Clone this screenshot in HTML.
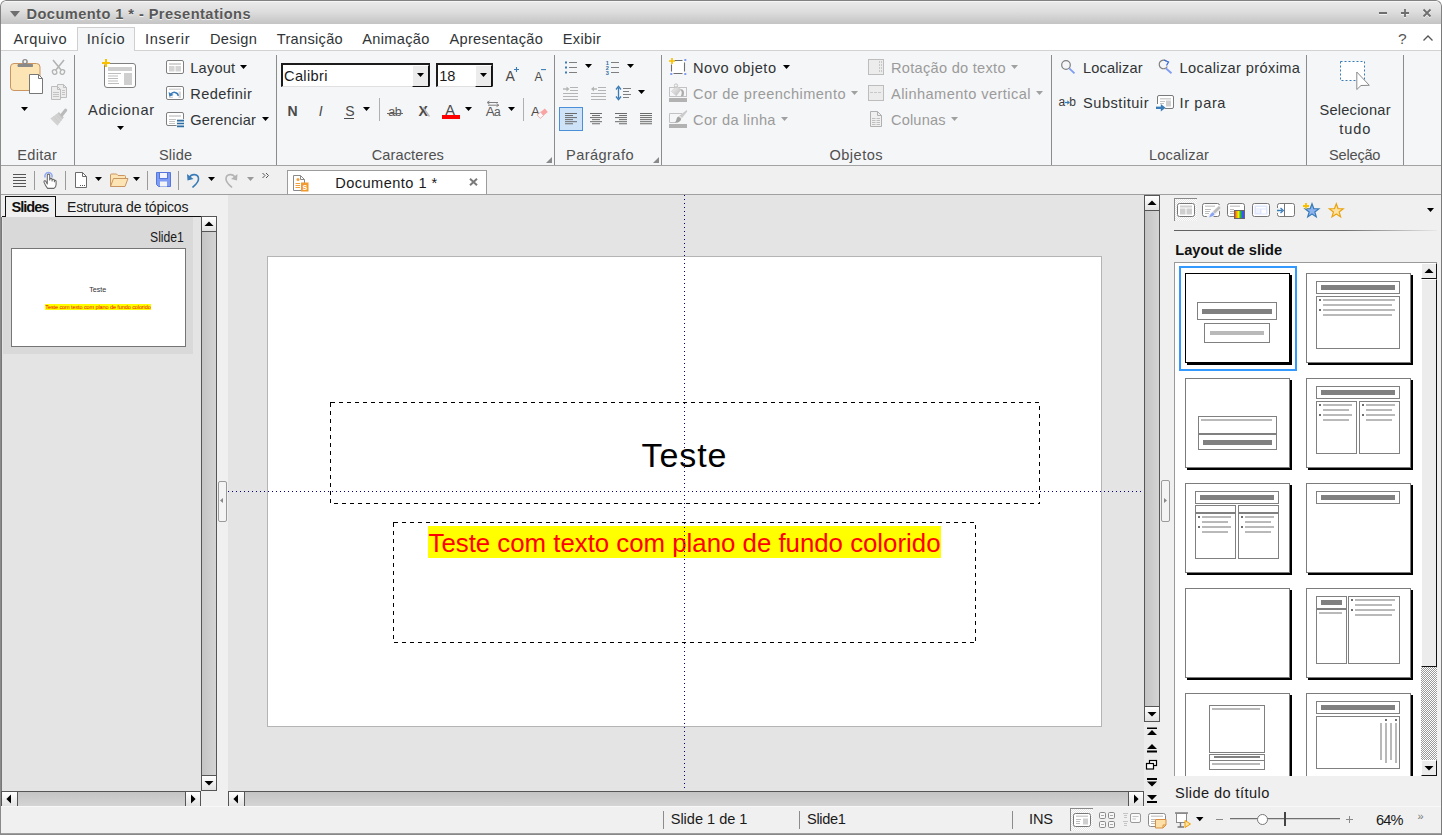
<!DOCTYPE html>
<html lang="pt-BR"><head><meta charset="utf-8"><title>Documento 1 * - Presentations</title>
<style>
html,body{margin:0;padding:0;background:#fff;}
body{width:1442px;height:835px;overflow:hidden;position:relative;font-family:"Liberation Sans",sans-serif;}
#win{position:absolute;left:0;top:0;width:1442px;height:835px;overflow:hidden;background:#f0f0f0;border-radius:6px 6px 0 0;}
#win div,#win span,#win svg{position:absolute;box-sizing:border-box;}
.t{white-space:nowrap;}
svg{overflow:visible;}
.vs{width:1px;background:#8c8c8c;}
.sbt{background:linear-gradient(90deg,#c4c4c4,#d4d4d4);}
.sbh{background:linear-gradient(180deg,#c4c4c4,#d4d4d4);}
.btn{background:linear-gradient(180deg,#ffffff,#e2e2e2);border:1px solid #555;}
</style></head><body><div id="win">
<div style="left:0px;top:0px;width:1442px;height:24px;background:linear-gradient(180deg,#ebebeb 0%,#dedede 45%,#c4c4c4 100%);border:1px solid #828282;border-bottom:none;border-radius:6px 6px 0 0;"></div><div style="left:5px;top:1px;width:1432px;height:1px;background:#f6f6f6;"></div><svg style="left:10px;top:11px;" width="10" height="6" viewBox="0 0 10 6"><path d="M0 0H10L5 6Z" fill="#6e6e6e"/></svg><span class="t" style="left:26.5px;top:6px;font-size:14.6px;line-height:16px;color:#585858;font-weight:700;font-family:'Liberation Sans', sans-serif;letter-spacing:0.441px;text-shadow:0 1px 0 rgba(255,255,255,.8);">Documento 1 * - Presentations</span><svg style="left:1379px;top:9px;" width="52" height="9" viewBox="0 0 52 9"><g stroke="#fff" stroke-width="1.800" fill="none" opacity=".7" transform="translate(0 1)"><path d="M0 4H8"/><path d="M22 4H30M26 0V8"/><path d="M44.500 0.500L51.500 7.500M51.500 0.500L44.500 7.500"/></g><g stroke="#6e6e6e" stroke-width="1.800" fill="none"><path d="M0 4H8"/><path d="M22 4H30M26 0V8"/><path d="M44.500 0.500L51.500 7.500M51.500 0.500L44.500 7.500"/></g></svg><div style="left:0px;top:24px;width:1442px;height:26px;background:#fff;"></div><div style="left:0px;top:50px;width:1442px;height:116px;background:#f5f6f7;border-top:1px solid #d2d2d2;"></div><div style="left:77px;top:27px;width:58px;height:24px;background:#f5f6f7;border:1px solid #cfcfcf;border-bottom:none;"></div><span class="t" style="left:13.5px;top:31px;font-size:14.6px;line-height:16px;color:#303436;font-weight:400;font-family:'Liberation Sans', sans-serif;letter-spacing:0.586px;">Arquivo</span><span class="t" style="left:86.7px;top:31px;font-size:14.6px;line-height:16px;color:#303436;font-weight:400;font-family:'Liberation Sans', sans-serif;letter-spacing:0.622px;">Início</span><span class="t" style="left:145.0px;top:31px;font-size:14.6px;line-height:16px;color:#303436;font-weight:400;font-family:'Liberation Sans', sans-serif;letter-spacing:0.659px;">Inserir</span><span class="t" style="left:209.9px;top:31px;font-size:14.6px;line-height:16px;color:#303436;font-weight:400;font-family:'Liberation Sans', sans-serif;letter-spacing:0.293px;">Design</span><span class="t" style="left:276.8px;top:31px;font-size:14.6px;line-height:16px;color:#303436;font-weight:400;font-family:'Liberation Sans', sans-serif;letter-spacing:0.294px;">Transição</span><span class="t" style="left:362.3px;top:31px;font-size:14.6px;line-height:16px;color:#303436;font-weight:400;font-family:'Liberation Sans', sans-serif;letter-spacing:0.299px;">Animação</span><span class="t" style="left:449.5px;top:31px;font-size:14.6px;line-height:16px;color:#303436;font-weight:400;font-family:'Liberation Sans', sans-serif;letter-spacing:0.294px;">Apresentação</span><span class="t" style="left:562.7px;top:31px;font-size:14.6px;line-height:16px;color:#303436;font-weight:400;font-family:'Liberation Sans', sans-serif;letter-spacing:0.360px;">Exibir</span><span class="t" style="left:1398px;top:30px;font-size:15.5px;line-height:17px;color:#555;font-weight:400;font-family:'Liberation Sans', sans-serif;">?</span><svg style="left:1422.5px;top:35px;" width="10" height="6" viewBox="0 0 10 6"><path d="M0.5 5.5L5 1L9.5 5.5" stroke="#555" stroke-width="1.3" fill="none"/></svg><div class="vs" style="left:74px;top:55px;width:1px;height:110px;"></div><div class="vs" style="left:276px;top:55px;width:1px;height:110px;"></div><div class="vs" style="left:554px;top:55px;width:1px;height:110px;"></div><div class="vs" style="left:661px;top:55px;width:1px;height:110px;"></div><div class="vs" style="left:1051px;top:55px;width:1px;height:110px;"></div><div class="vs" style="left:1306px;top:55px;width:1px;height:110px;"></div><div class="vs" style="left:1403px;top:55px;width:1px;height:110px;"></div><div style="left:0px;top:165px;width:1442px;height:1px;background:#a3a3a3;"></div><div style="left:379px;top:98px;width:1px;height:23px;background:#b0b0b0;"></div><div style="left:523px;top:98px;width:1px;height:23px;background:#b0b0b0;"></div><span class="t" style="left:17.2px;top:147px;font-size:14.6px;line-height:16px;color:#505050;font-weight:400;font-family:'Liberation Sans', sans-serif;letter-spacing:0.295px;">Editar</span><span class="t" style="left:159.0px;top:147px;font-size:14.6px;line-height:16px;color:#505050;font-weight:400;font-family:'Liberation Sans', sans-serif;letter-spacing:0.137px;">Slide</span><span class="t" style="left:371.7px;top:147px;font-size:14.6px;line-height:16px;color:#505050;font-weight:400;font-family:'Liberation Sans', sans-serif;letter-spacing:0.092px;">Caracteres</span><span class="t" style="left:566.0px;top:147px;font-size:14.6px;line-height:16px;color:#505050;font-weight:400;font-family:'Liberation Sans', sans-serif;letter-spacing:0.426px;">Parágrafo</span><span class="t" style="left:829.5px;top:147px;font-size:14.6px;line-height:16px;color:#505050;font-weight:400;font-family:'Liberation Sans', sans-serif;letter-spacing:0.451px;">Objetos</span><span class="t" style="left:1149.0px;top:147px;font-size:14.6px;line-height:16px;color:#505050;font-weight:400;font-family:'Liberation Sans', sans-serif;letter-spacing:0.174px;">Localizar</span><span class="t" style="left:1329.0px;top:147px;font-size:14.6px;line-height:16px;color:#505050;font-weight:400;font-family:'Liberation Sans', sans-serif;letter-spacing:-0.208px;">Seleção</span><svg style="left:546px;top:157px;" width="6" height="6" viewBox="0 0 6 6"><path d="M6 0V6H0Z" fill="#8a8a8a"/></svg><svg style="left:653px;top:157px;" width="6" height="6" viewBox="0 0 6 6"><path d="M6 0V6H0Z" fill="#8a8a8a"/></svg><span class="t" style="left:88px;top:102px;font-size:14.6px;line-height:16px;color:#303436;font-weight:400;font-family:'Liberation Sans', sans-serif;letter-spacing:0.645px;">Adicionar</span><span class="t" style="left:190.3px;top:60px;font-size:14.6px;line-height:16px;color:#303436;font-weight:400;font-family:'Liberation Sans', sans-serif;letter-spacing:0.194px;">Layout</span><span class="t" style="left:190.3px;top:86px;font-size:14.6px;line-height:16px;color:#303436;font-weight:400;font-family:'Liberation Sans', sans-serif;letter-spacing:0.387px;">Redefinir</span><span class="t" style="left:190.3px;top:112px;font-size:14.6px;line-height:16px;color:#303436;font-weight:400;font-family:'Liberation Sans', sans-serif;letter-spacing:0.178px;">Gerenciar</span><span class="t" style="left:693px;top:60px;font-size:14.6px;line-height:16px;color:#303436;font-weight:400;font-family:'Liberation Sans', sans-serif;letter-spacing:0.511px;">Novo objeto</span><span class="t" style="left:693px;top:86px;font-size:14.6px;line-height:16px;color:#9b9b9b;font-weight:400;font-family:'Liberation Sans', sans-serif;letter-spacing:0.426px;">Cor de preenchimento</span><span class="t" style="left:693px;top:112px;font-size:14.6px;line-height:16px;color:#9b9b9b;font-weight:400;font-family:'Liberation Sans', sans-serif;letter-spacing:0.345px;">Cor da linha</span><span class="t" style="left:891px;top:60px;font-size:14.6px;line-height:16px;color:#9b9b9b;font-weight:400;font-family:'Liberation Sans', sans-serif;letter-spacing:0.277px;">Rotação do texto</span><span class="t" style="left:891px;top:86px;font-size:14.6px;line-height:16px;color:#9b9b9b;font-weight:400;font-family:'Liberation Sans', sans-serif;letter-spacing:0.425px;">Alinhamento vertical</span><span class="t" style="left:891px;top:112px;font-size:14.6px;line-height:16px;color:#9b9b9b;font-weight:400;font-family:'Liberation Sans', sans-serif;letter-spacing:0.159px;">Colunas</span><span class="t" style="left:1083px;top:60px;font-size:14.6px;line-height:16px;color:#303436;font-weight:400;font-family:'Liberation Sans', sans-serif;letter-spacing:0.137px;">Localizar</span><span class="t" style="left:1179.5px;top:60px;font-size:14.6px;line-height:16px;color:#303436;font-weight:400;font-family:'Liberation Sans', sans-serif;letter-spacing:0.383px;">Localizar próxima</span><span class="t" style="left:1083px;top:95px;font-size:14.6px;line-height:16px;color:#303436;font-weight:400;font-family:'Liberation Sans', sans-serif;letter-spacing:0.517px;">Substituir</span><span class="t" style="left:1179.5px;top:95px;font-size:14.6px;line-height:16px;color:#303436;font-weight:400;font-family:'Liberation Sans', sans-serif;letter-spacing:0.635px;">Ir para</span><span class="t" style="left:1319.5px;top:102px;font-size:14.6px;line-height:16px;color:#303436;font-weight:400;font-family:'Liberation Sans', sans-serif;letter-spacing:0.226px;">Selecionar</span><span class="t" style="left:1339.3px;top:121px;font-size:14.6px;line-height:16px;color:#303436;font-weight:400;font-family:'Liberation Sans', sans-serif;letter-spacing:0.865px;">tudo</span><svg style="left:20.8px;top:106.8px;" width="7" height="4" viewBox="0 0 7 4"><path d="M0 0H7L3.5 4Z" fill="#000"/></svg><svg style="left:116.5px;top:125.5px;" width="7" height="4" viewBox="0 0 7 4"><path d="M0 0H7L3.5 4Z" fill="#000"/></svg><svg style="left:240.2px;top:65.2px;" width="7" height="4" viewBox="0 0 7 4"><path d="M0 0H7L3.5 4Z" fill="#000"/></svg><svg style="left:262px;top:117.3px;" width="7" height="4" viewBox="0 0 7 4"><path d="M0 0H7L3.5 4Z" fill="#000"/></svg><svg style="left:363px;top:106.9px;" width="7" height="4" viewBox="0 0 7 4"><path d="M0 0H7L3.5 4Z" fill="#000"/></svg><svg style="left:464.8px;top:106.9px;" width="7" height="4" viewBox="0 0 7 4"><path d="M0 0H7L3.5 4Z" fill="#000"/></svg><svg style="left:507.8px;top:106.9px;" width="7" height="4" viewBox="0 0 7 4"><path d="M0 0H7L3.5 4Z" fill="#000"/></svg><svg style="left:584.8px;top:63.8px;" width="7" height="4" viewBox="0 0 7 4"><path d="M0 0H7L3.5 4Z" fill="#000"/></svg><svg style="left:626.8px;top:63.8px;" width="7" height="4" viewBox="0 0 7 4"><path d="M0 0H7L3.5 4Z" fill="#000"/></svg><svg style="left:638px;top:90px;" width="7" height="4" viewBox="0 0 7 4"><path d="M0 0H7L3.5 4Z" fill="#000"/></svg><svg style="left:783px;top:65.1px;" width="7" height="4" viewBox="0 0 7 4"><path d="M0 0H7L3.5 4Z" fill="#000"/></svg><svg style="left:851px;top:91px;" width="7" height="4" viewBox="0 0 7 4"><path d="M0 0H7L3.5 4Z" fill="#a0a0a0"/></svg><svg style="left:781px;top:117px;" width="7" height="4" viewBox="0 0 7 4"><path d="M0 0H7L3.5 4Z" fill="#a0a0a0"/></svg><svg style="left:1010.8px;top:65.1px;" width="7" height="4" viewBox="0 0 7 4"><path d="M0 0H7L3.5 4Z" fill="#a0a0a0"/></svg><svg style="left:1036px;top:91px;" width="7" height="4" viewBox="0 0 7 4"><path d="M0 0H7L3.5 4Z" fill="#a0a0a0"/></svg><svg style="left:951px;top:117px;" width="7" height="4" viewBox="0 0 7 4"><path d="M0 0H7L3.5 4Z" fill="#a0a0a0"/></svg><div style="left:281px;top:63px;width:149px;height:24px;background:#fff;border:2px solid #1c1c1c;border-right-width:1px;border-bottom:1px solid #e0e0e0;"></div><div style="left:412px;top:65px;width:17px;height:22px;background:#ececec;border-right:1px solid #111;border-bottom:1px solid #111;border-top:1px solid #fff;border-left:1px solid #fff;"></div><svg style="left:416.5px;top:73px;" width="7" height="4" viewBox="0 0 7 4"><path d="M0 0H7L3.5 4Z" fill="#000"/></svg><div style="left:436px;top:63px;width:57px;height:24px;background:#fff;border:2px solid #1c1c1c;border-right-width:1px;border-bottom:1px solid #e0e0e0;"></div><div style="left:475px;top:65px;width:17px;height:22px;background:#ececec;border-right:1px solid #111;border-bottom:1px solid #111;border-top:1px solid #fff;border-left:1px solid #fff;"></div><svg style="left:479.5px;top:73px;" width="7" height="4" viewBox="0 0 7 4"><path d="M0 0H7L3.5 4Z" fill="#000"/></svg><span class="t" style="left:284px;top:68px;font-size:14.6px;line-height:16px;color:#1a1a1a;font-weight:400;font-family:'Liberation Sans', sans-serif;letter-spacing:0.357px;">Calibri</span><span class="t" style="left:439.3px;top:68px;font-size:14.6px;line-height:16px;color:#1a1a1a;font-weight:400;font-family:'Liberation Sans', sans-serif;letter-spacing:-0.234px;">18</span><div style="left:0px;top:166px;width:1442px;height:28px;background:#f0f0f0;"></div><div style="left:0px;top:194px;width:1442px;height:1px;background:#a0a0a0;"></div><div style="left:34px;top:171px;width:1px;height:19px;background:#9a9a9a;"></div><div style="left:65px;top:171px;width:1px;height:19px;background:#9a9a9a;"></div><div style="left:147px;top:171px;width:1px;height:19px;background:#9a9a9a;"></div><div style="left:178px;top:171px;width:1px;height:19px;background:#9a9a9a;"></div><svg style="left:95px;top:177.2px;" width="7" height="4" viewBox="0 0 7 4"><path d="M0 0H7L3.5 4Z" fill="#000"/></svg><svg style="left:133px;top:177.2px;" width="7" height="4" viewBox="0 0 7 4"><path d="M0 0H7L3.5 4Z" fill="#000"/></svg><svg style="left:208px;top:177.2px;" width="7" height="4" viewBox="0 0 7 4"><path d="M0 0H7L3.5 4Z" fill="#000"/></svg><svg style="left:246.7px;top:177.2px;" width="7" height="4" viewBox="0 0 7 4"><path d="M0 0H7L3.5 4Z" fill="#9a9a9a"/></svg><div style="left:287px;top:170px;width:200px;height:24px;background:#fff;border:1px solid #9c9c9c;border-bottom:none;"></div><span class="t" style="left:335.2px;top:175px;font-size:14.6px;line-height:16px;color:#1a1a1a;font-weight:400;font-family:'Liberation Sans', sans-serif;letter-spacing:0.454px;">Documento 1 *</span><span class="t" style="left:302.6px;top:182px;font-size:8.5px;line-height:10px;color:#fff;font-weight:700;font-family:'Liberation Sans', sans-serif;z-index:5;">s</span><svg style="left:469px;top:178px;" width="9" height="8" viewBox="0 0 9 8"><path d="M1 0.8L8 7.2M8 0.8L1 7.2" stroke="#7a7a7a" stroke-width="2" fill="none"/></svg><div style="left:0px;top:195px;width:228px;height:611px;background:#f0f0f0;"></div><div style="left:2px;top:217px;width:199px;height:575px;background:#e4e4e4;"></div><div style="left:3px;top:217px;width:190px;height:137px;background:#d9d9d9;"></div><div style="left:56px;top:216px;width:161px;height:1px;background:#111;"></div><div style="left:2px;top:216px;width:4px;height:1px;background:#111;"></div><div style="left:5px;top:196px;width:51px;height:21px;background:#f0f0f0;border:1px solid #111;border-bottom:none;"></div><span class="t" style="left:11.5px;top:199px;font-size:14.6px;line-height:16px;color:#111;font-weight:700;font-family:'Liberation Sans', sans-serif;letter-spacing:-1.000px;">Slides</span><span class="t" style="left:67px;top:199px;font-size:14.0px;line-height:16px;color:#1a1a1a;font-weight:400;font-family:'Liberation Sans', sans-serif;letter-spacing:-0.159px;">Estrutura de tópicos</span><span class="t" style="left:150px;top:229px;font-size:14.6px;line-height:16px;color:#1a1a1a;font-weight:400;font-family:'Liberation Sans', sans-serif;transform:scaleX(.835);transform-origin:0 50%;">Slide1</span><div style="left:1px;top:217px;width:1px;height:589px;background:#777;"></div><div style="left:11px;top:248px;width:175px;height:99px;background:#fff;border:1px solid #767676;"></div><span class="t" style="left:89.2px;top:285px;font-size:7.2px;line-height:9px;color:#333;font-weight:400;font-family:'Liberation Sans', sans-serif;letter-spacing:-0.047px;">Teste</span><div style="left:45px;top:304px;width:106px;height:6px;background:#ffff00;"></div><span class="t" style="left:45.3px;top:304px;font-size:5.6px;line-height:6px;color:#e81000;font-weight:400;font-family:'Liberation Sans', sans-serif;letter-spacing:-0.131px;">Teste com texto com plano de fundo colorido</span><div class="sbt" style="left:201px;top:216px;width:16px;height:575px;border:1px solid #555;"></div><div class="btn" style="left:201px;top:216px;width:16px;height:16px;"></div><div class="btn" style="left:201px;top:775px;width:16px;height:16px;"></div><svg style="left:205px;top:221px;" width="8" height="5" viewBox="0 0 8 5"><path d="M-0.500 5L4 0.400L8.500 5Z" fill="#000"/></svg><svg style="left:205px;top:781px;" width="8" height="5" viewBox="0 0 8 5"><path d="M-0.500 0L4 4.600L8.500 0Z" fill="#000"/></svg><div class="sbh" style="left:1px;top:791px;width:200px;height:15px;border:1px solid #555;border-bottom:none;"></div><div class="btn" style="left:1px;top:791px;width:17px;height:15px;border-bottom:none;"></div><div class="btn" style="left:185px;top:791px;width:16px;height:15px;border-bottom:none;"></div><svg style="left:6px;top:795px;" width="5" height="8" viewBox="0 0 5 8"><path d="M5 -0.500L0.400 4L5 8.500Z" fill="#000"/></svg><svg style="left:191px;top:795px;" width="5" height="8" viewBox="0 0 5 8"><path d="M0 -0.500L4.600 4L0 8.500Z" fill="#000"/></svg><div style="left:218px;top:481px;width:9px;height:41px;background:#f4f4f4;border:1px solid #9a9a9a;border-radius:2px;"></div><svg style="left:220px;top:498px;" width="3" height="5" viewBox="0 0 3 5"><path d="M3 0L0 2.5L3 5Z" fill="#888"/></svg><div style="left:228px;top:195px;width:916px;height:596px;background:#e4e4e4;"></div><div style="left:267px;top:256px;width:835px;height:471px;background:#fff;border:1px solid #b4b4b4;"></div><svg style="left:330px;top:402px;" width="710" height="102" viewBox="0 0 710 102"><rect x="0.5" y="0.5" width="709" height="101" fill="none" stroke="#000" stroke-width="1" stroke-dasharray="4 4" shape-rendering="crispEdges"/></svg><svg style="left:393px;top:522px;" width="583" height="121" viewBox="0 0 583 121"><rect x="0.5" y="0.5" width="582" height="120" fill="none" stroke="#000" stroke-width="1" stroke-dasharray="4 4" shape-rendering="crispEdges"/></svg><span class="t" style="left:641.5px;top:436px;font-size:34px;line-height:38px;color:#000;font-weight:400;font-family:'Liberation Sans', sans-serif;letter-spacing:0.934px;">Teste</span><div style="left:428px;top:526px;width:513px;height:32px;background:#ffff00;"></div><span class="t" style="left:428.5px;top:529px;font-size:25.8px;line-height:28px;color:#ff0000;font-weight:400;font-family:'Liberation Sans', sans-serif;letter-spacing:0.001px;">Teste com texto com plano de fundo colorido</span><div style="left:684px;top:195px;width:1px;height:596px;background:repeating-linear-gradient(180deg,#000080 0 1px,transparent 1px 4px);"></div><div style="left:228px;top:491px;width:916px;height:1px;background:repeating-linear-gradient(90deg,#000080 0 1px,transparent 1px 4px);"></div><div class="sbt" style="left:1144px;top:195px;width:16px;height:527px;border:1px solid #555;"></div><div class="btn" style="left:1144px;top:195px;width:16px;height:16px;"></div><div class="btn" style="left:1144px;top:706px;width:16px;height:16px;"></div><svg style="left:1148px;top:200px;" width="8" height="5" viewBox="0 0 8 5"><path d="M-0.500 5L4 0.400L8.500 5Z" fill="#000"/></svg><svg style="left:1148px;top:712px;" width="8" height="5" viewBox="0 0 8 5"><path d="M-0.500 0L4 4.600L8.500 0Z" fill="#000"/></svg><div style="left:1144px;top:722px;width:16px;height:84px;background:#ececec;"></div><div class="sbh" style="left:228px;top:791px;width:916px;height:15px;border:1px solid #555;border-bottom:none;"></div><div class="btn" style="left:228px;top:791px;width:17px;height:15px;border-bottom:none;"></div><div class="btn" style="left:1128px;top:791px;width:16px;height:15px;border-bottom:none;"></div><svg style="left:233px;top:795px;" width="5" height="8" viewBox="0 0 5 8"><path d="M5 -0.500L0.400 4L5 8.500Z" fill="#000"/></svg><svg style="left:1134px;top:795px;" width="5" height="8" viewBox="0 0 5 8"><path d="M0 -0.500L4.600 4L0 8.500Z" fill="#000"/></svg><div style="left:1160px;top:195px;width:282px;height:611px;background:#f0f0f0;"></div><div style="left:1161px;top:480px;width:9px;height:42px;background:#f4f4f4;border:1px solid #9a9a9a;border-radius:2px;"></div><svg style="left:1164px;top:498px;" width="3" height="5" viewBox="0 0 3 5"><path d="M0 0L3 2.5L0 5Z" fill="#888"/></svg><div style="left:1174px;top:198px;width:23px;height:23px;border-left:1px solid #8a8a8a;border-top:1px solid #8a8a8a;background-color:#fff;background-image:conic-gradient(#e6e6e6 25%,#fff 0 50%,#e6e6e6 0 75%,#fff 0);background-size:2px 2px;"></div><svg style="left:1427px;top:208px;" width="7" height="4" viewBox="0 0 7 4"><path d="M0 0H7L3.5 4Z" fill="#000"/></svg><div style="left:1174px;top:230px;width:263px;height:1px;background:linear-gradient(90deg,#626262 0%,#707070 65%,#e8e8e8 100%);"></div><span class="t" style="left:1175.2px;top:242px;font-size:14.6px;line-height:16px;color:#111;font-weight:700;font-family:'Liberation Sans', sans-serif;letter-spacing:0.055px;">Layout de slide</span><div style="left:1174px;top:262px;width:263px;height:514px;background:#fff;border:1px solid #9a9a9a;border-bottom:none;"></div><div style="left:1179px;top:266px;width:118px;height:105px;border:2px solid #3399ff;"></div><div style="left:1187px;top:275px;width:105px;height:90px;background:#000;"></div><div style="left:1185px;top:273px;width:105px;height:90px;background:#fff;border:1px solid #000;"></div><div style="left:1197px;top:302px;width:80px;height:18px;border:1px solid #808080;background:#fff;"></div><div style="left:1202px;top:309px;width:70px;height:5px;background:#808080;"></div><div style="left:1204px;top:323px;width:66px;height:20px;border:1px solid #808080;background:#fff;"></div><div style="left:1210px;top:331px;width:54px;height:4px;background:#b9b9b9;"></div><div style="left:1308px;top:275px;width:105px;height:90px;background:#000;"></div><div style="left:1306px;top:273px;width:105px;height:90px;background:#fff;border:1px solid #7c7c7c;"></div><div style="left:1316px;top:281px;width:84px;height:13px;border:1px solid #808080;background:#fff;"></div><div style="left:1321px;top:285px;width:74px;height:5px;background:#808080;"></div><div style="left:1316px;top:296px;width:84px;height:53px;border:1px solid #808080;background:#fff;"></div><div style="left:1319px;top:299px;width:2px;height:2px;background:#6e6e6e;"></div><div style="left:1323px;top:299px;width:72px;height:2px;background:#b9b9b9;"></div><div style="left:1323px;top:304px;width:69px;height:2px;background:#b9b9b9;"></div><div style="left:1319px;top:309px;width:2px;height:2px;background:#6e6e6e;"></div><div style="left:1323px;top:309px;width:72px;height:2px;background:#b9b9b9;"></div><div style="left:1323px;top:314px;width:69px;height:2px;background:#b9b9b9;"></div><div style="left:1187px;top:380px;width:105px;height:90px;background:#000;"></div><div style="left:1185px;top:378px;width:105px;height:90px;background:#fff;border:1px solid #7c7c7c;"></div><div style="left:1198px;top:416px;width:79px;height:18px;border:1px solid #808080;background:#fff;"></div><div style="left:1201px;top:419px;width:71px;height:2px;background:#b9b9b9;"></div><div style="left:1198px;top:434px;width:79px;height:16px;border:1px solid #808080;background:#fff;"></div><div style="left:1203px;top:440px;width:69px;height:5px;background:#808080;"></div><div style="left:1308px;top:380px;width:105px;height:90px;background:#000;"></div><div style="left:1306px;top:378px;width:105px;height:90px;background:#fff;border:1px solid #7c7c7c;"></div><div style="left:1316px;top:386px;width:84px;height:13px;border:1px solid #808080;background:#fff;"></div><div style="left:1321px;top:390px;width:74px;height:5px;background:#808080;"></div><div style="left:1316px;top:401px;width:41px;height:53px;border:1px solid #808080;background:#fff;"></div><div style="left:1359px;top:401px;width:41px;height:53px;border:1px solid #808080;background:#fff;"></div><div style="left:1319px;top:404px;width:2px;height:2px;background:#6e6e6e;"></div><div style="left:1323px;top:404px;width:29px;height:2px;background:#b9b9b9;"></div><div style="left:1323px;top:409px;width:26px;height:2px;background:#b9b9b9;"></div><div style="left:1319px;top:414px;width:2px;height:2px;background:#6e6e6e;"></div><div style="left:1323px;top:414px;width:29px;height:2px;background:#b9b9b9;"></div><div style="left:1323px;top:419px;width:26px;height:2px;background:#b9b9b9;"></div><div style="left:1362px;top:404px;width:2px;height:2px;background:#6e6e6e;"></div><div style="left:1366px;top:404px;width:29px;height:2px;background:#b9b9b9;"></div><div style="left:1366px;top:409px;width:26px;height:2px;background:#b9b9b9;"></div><div style="left:1362px;top:414px;width:2px;height:2px;background:#6e6e6e;"></div><div style="left:1366px;top:414px;width:29px;height:2px;background:#b9b9b9;"></div><div style="left:1366px;top:419px;width:26px;height:2px;background:#b9b9b9;"></div><div style="left:1187px;top:485px;width:105px;height:90px;background:#000;"></div><div style="left:1185px;top:483px;width:105px;height:90px;background:#fff;border:1px solid #7c7c7c;"></div><div style="left:1195px;top:491px;width:84px;height:13px;border:1px solid #808080;background:#fff;"></div><div style="left:1200px;top:495px;width:74px;height:5px;background:#808080;"></div><div style="left:1195px;top:505px;width:41px;height:8px;border:1px solid #808080;background:#fff;"></div><div style="left:1238px;top:505px;width:41px;height:8px;border:1px solid #808080;background:#fff;"></div><div style="left:1195px;top:513px;width:41px;height:46px;border:1px solid #808080;background:#fff;"></div><div style="left:1238px;top:513px;width:41px;height:46px;border:1px solid #808080;background:#fff;"></div><div style="left:1198px;top:516px;width:2px;height:2px;background:#6e6e6e;"></div><div style="left:1202px;top:516px;width:29px;height:2px;background:#b9b9b9;"></div><div style="left:1202px;top:521px;width:26px;height:2px;background:#b9b9b9;"></div><div style="left:1198px;top:526px;width:2px;height:2px;background:#6e6e6e;"></div><div style="left:1202px;top:526px;width:29px;height:2px;background:#b9b9b9;"></div><div style="left:1202px;top:531px;width:26px;height:2px;background:#b9b9b9;"></div><div style="left:1241px;top:516px;width:2px;height:2px;background:#6e6e6e;"></div><div style="left:1245px;top:516px;width:29px;height:2px;background:#b9b9b9;"></div><div style="left:1245px;top:521px;width:26px;height:2px;background:#b9b9b9;"></div><div style="left:1241px;top:526px;width:2px;height:2px;background:#6e6e6e;"></div><div style="left:1245px;top:526px;width:29px;height:2px;background:#b9b9b9;"></div><div style="left:1245px;top:531px;width:26px;height:2px;background:#b9b9b9;"></div><div style="left:1308px;top:485px;width:105px;height:90px;background:#000;"></div><div style="left:1306px;top:483px;width:105px;height:90px;background:#fff;border:1px solid #7c7c7c;"></div><div style="left:1316px;top:491px;width:84px;height:13px;border:1px solid #808080;background:#fff;"></div><div style="left:1321px;top:495px;width:74px;height:5px;background:#808080;"></div><div style="left:1187px;top:590px;width:105px;height:90px;background:#000;"></div><div style="left:1185px;top:588px;width:105px;height:90px;background:#fff;border:1px solid #7c7c7c;"></div><div style="left:1308px;top:590px;width:105px;height:90px;background:#000;"></div><div style="left:1306px;top:588px;width:105px;height:90px;background:#fff;border:1px solid #7c7c7c;"></div><div style="left:1316px;top:596px;width:31px;height:13px;border:1px solid #808080;background:#fff;"></div><div style="left:1321px;top:600px;width:21px;height:5px;background:#808080;"></div><div style="left:1316px;top:609px;width:31px;height:55px;border:1px solid #808080;background:#fff;"></div><div style="left:1319px;top:612px;width:23px;height:2px;background:#b9b9b9;"></div><div style="left:1348px;top:596px;width:52px;height:68px;border:1px solid #808080;background:#fff;"></div><div style="left:1351px;top:599px;width:2px;height:2px;background:#6e6e6e;"></div><div style="left:1355px;top:599px;width:40px;height:2px;background:#b9b9b9;"></div><div style="left:1355px;top:604px;width:37px;height:2px;background:#b9b9b9;"></div><div style="left:1351px;top:609px;width:2px;height:2px;background:#6e6e6e;"></div><div style="left:1355px;top:609px;width:40px;height:2px;background:#b9b9b9;"></div><div style="left:1355px;top:614px;width:37px;height:2px;background:#b9b9b9;"></div><div style="left:1187px;top:695px;width:105px;height:81px;background:#000;"></div><div style="left:1185px;top:693px;width:105px;height:83px;background:#fff;border:1px solid #7c7c7c;border-bottom:none;"></div><div style="left:1209px;top:705px;width:56px;height:48px;border:1px solid #808080;background:#fff;"></div><div style="left:1212px;top:708px;width:48px;height:2px;background:#b9b9b9;"></div><div style="left:1209px;top:754px;width:56px;height:7px;border:1px solid #808080;background:#fff;"></div><div style="left:1214px;top:756px;width:46px;height:2px;background:#808080;"></div><div style="left:1209px;top:760px;width:56px;height:10px;border:1px solid #808080;background:#fff;"></div><div style="left:1212px;top:763px;width:48px;height:2px;background:#b9b9b9;"></div><div style="left:1308px;top:695px;width:105px;height:81px;background:#000;"></div><div style="left:1306px;top:693px;width:105px;height:83px;background:#fff;border:1px solid #7c7c7c;border-bottom:none;"></div><div style="left:1316px;top:701px;width:84px;height:13px;border:1px solid #808080;background:#fff;"></div><div style="left:1321px;top:705px;width:74px;height:5px;background:#808080;"></div><div style="left:1316px;top:716px;width:84px;height:53px;border:1px solid #808080;background:#fff;"></div><div style="left:1380px;top:723px;width:2px;height:37px;background:#b9b9b9;"></div><div style="left:1385px;top:723px;width:2px;height:40px;background:#b9b9b9;"></div><div style="left:1390px;top:723px;width:2px;height:37px;background:#b9b9b9;"></div><div style="left:1395px;top:723px;width:2px;height:40px;background:#b9b9b9;"></div><div style="left:1385px;top:719px;width:2px;height:2px;background:#6e6e6e;"></div><div style="left:1395px;top:719px;width:2px;height:2px;background:#6e6e6e;"></div><div style="left:1421px;top:263px;width:16px;height:513px;background:#d8d8d8;"></div><div style="left:1421px;top:667px;width:16px;height:93px;background-color:#fff;background-image:conic-gradient(#9a9a9a 25%,#fff 0 50%,#9a9a9a 0 75%,#fff 0);background-size:2px 2px;"></div><div style="left:1421px;top:279px;width:16px;height:388px;background:#ececec;border:1px solid #111;border-left-color:#fff;border-top-color:#fff;"></div><div style="left:1421px;top:263px;width:16px;height:16px;background:#ececec;border:1px solid #111;border-left-color:#fff;border-top-color:#fff;"></div><div style="left:1421px;top:760px;width:16px;height:16px;background:#ececec;border:1px solid #111;border-left-color:#fff;border-top-color:#fff;"></div><svg style="left:1425px;top:268px;" width="8" height="5" viewBox="0 0 8 5"><path d="M-0.500 5L4 0.400L8.500 5Z" fill="#000"/></svg><svg style="left:1425px;top:766px;" width="8" height="5" viewBox="0 0 8 5"><path d="M-0.500 0L4 4.600L8.500 0Z" fill="#000"/></svg><div style="left:1174px;top:776px;width:263px;height:1px;background:#f0f0f0;"></div><span class="t" style="left:1175px;top:785px;font-size:14.6px;line-height:16px;color:#1a1a1a;font-weight:400;font-family:'Liberation Sans', sans-serif;letter-spacing:0.419px;">Slide do título</span><div style="left:0px;top:806px;width:1442px;height:29px;background:#f0f0f0;border-top:1px solid #f8f8f8;"></div><div style="left:0px;top:833px;width:1442px;height:2px;background:linear-gradient(180deg,#a8a8a8,#7e7e7e);"></div><div style="left:663px;top:811px;width:1px;height:18px;background:#8c8c8c;"></div><div style="left:799px;top:811px;width:1px;height:18px;background:#8c8c8c;"></div><div style="left:1012px;top:811px;width:1px;height:18px;background:#8c8c8c;"></div><span class="t" style="left:670.7px;top:811px;font-size:14.6px;line-height:16px;color:#1a1a1a;font-weight:400;font-family:'Liberation Sans', sans-serif;letter-spacing:-0.027px;">Slide 1 de 1</span><span class="t" style="left:807px;top:811px;font-size:14.6px;line-height:16px;color:#1a1a1a;font-weight:400;font-family:'Liberation Sans', sans-serif;letter-spacing:-0.356px;">Slide1</span><span class="t" style="left:1029px;top:811px;font-size:14.6px;line-height:16px;color:#1a1a1a;font-weight:400;font-family:'Liberation Sans', sans-serif;letter-spacing:-0.164px;">INS</span><span class="t" style="left:1376px;top:812px;font-size:14.6px;line-height:16px;color:#1a1a1a;font-weight:400;font-family:'Liberation Sans', sans-serif;letter-spacing:-0.859px;">64%</span><div style="left:1070px;top:808px;width:23px;height:23px;border-left:1px solid #8a8a8a;border-top:1px solid #8a8a8a;background-color:#fff;background-image:conic-gradient(#e6e6e6 25%,#fff 0 50%,#e6e6e6 0 75%,#fff 0);background-size:2px 2px;"></div><div style="left:1230px;top:818px;width:110px;height:1px;background:#707070;"></div><div style="left:1230px;top:819px;width:110px;height:1px;background:#d0d0d0;"></div><div style="left:1284px;top:812px;width:2px;height:14px;background:#444;"></div><div style="left:1256.5px;top:813.5px;width:11px;height:11px;border-radius:50%;background:#fff;border:1px solid #777;"></div><div style="left:1216px;top:819px;width:7px;height:1px;background:#8a8a8a;"></div><div style="left:1346px;top:819px;width:7px;height:1px;background:#8a8a8a;"></div><div style="left:1349px;top:816px;width:1px;height:7px;background:#8a8a8a;"></div><span class="t" style="left:1417.5px;top:810px;font-size:11px;line-height:12px;color:#777;font-weight:400;font-family:'Liberation Sans', sans-serif;">»</span><div style="left:0px;top:24px;width:1px;height:811px;background:#8a8a8a;"></div><div style="left:1441px;top:24px;width:1px;height:811px;background:#7a7a7a;"></div><span class="t" style="left:287.4px;top:103px;font-size:14px;line-height:16px;color:#4a4a4a;font-weight:700;font-family:'Liberation Sans', sans-serif;">N</span><span class="t" style="left:318.8px;top:103px;font-size:14px;line-height:16px;color:#4a4a4a;font-weight:400;font-style:italic;font-family:'Liberation Sans', sans-serif;">I</span><span class="t" style="left:345.3px;top:103px;font-size:14px;line-height:16px;color:#4a4a4a;font-weight:400;font-family:'Liberation Sans', sans-serif;">S</span><div style="left:344px;top:117.5px;width:10px;height:1px;background:#4a4a4a;"></div><span class="t" style="left:388.3px;top:105px;font-size:12.5px;line-height:14px;color:#555;font-weight:400;font-family:'Liberation Sans', sans-serif;letter-spacing:-0.406px;">ab</span><div style="left:387px;top:112.5px;width:16px;height:1px;background:#6a6a6a;"></div><span class="t" style="left:418.6px;top:103px;font-size:14px;line-height:16px;color:#4a4a4a;font-weight:700;font-family:'Liberation Sans', sans-serif;">X</span><svg style="left:421px;top:107px;" width="9" height="10" viewBox="0 0 9 10"><path d="M2 0.500L8.500 9.500" stroke="#b8b8b8" stroke-width="1.300" fill="none"/></svg><span class="t" style="left:445.3px;top:102px;font-size:14.6px;line-height:16px;color:#4a4a4a;font-weight:400;font-family:'Liberation Sans', sans-serif;">A</span><div style="left:442px;top:115px;width:18px;height:4px;background:#ff0000;"></div><span class="t" style="left:485.8px;top:104px;font-size:13.5px;line-height:15px;color:#5a5a5a;font-weight:400;font-family:'Liberation Sans', sans-serif;">A</span><span class="t" style="left:494px;top:105px;font-size:12px;line-height:14px;color:#5a5a5a;font-weight:400;font-family:'Liberation Sans', sans-serif;">a</span><svg style="left:486px;top:101px;" width="15" height="5" viewBox="0 0 15 5"><path d="M2 1.500H12M2 4.200H12" stroke="#7f7f7f" fill="none"/><path d="M3.500 0L1 1.500L3.500 3M10.500 2.700L13 4.200L10.500 5.700" stroke="#7f7f7f" fill="none" stroke-width="0.900"/></svg><span class="t" style="left:531px;top:104px;font-size:13.2px;line-height:15px;color:#4a4a4a;font-weight:400;font-family:'Liberation Sans', sans-serif;">A</span><svg style="left:537px;top:108px;" width="11" height="11" viewBox="0 0 11 11"><g transform="rotate(-40 5.500 5.500)"><rect x="0.500" y="3.200" width="4.500" height="4.600" fill="#fafafa" stroke="#e4a0a0" stroke-width="0.700"/><rect x="5" y="3.200" width="5.500" height="4.600" fill="#f9a3a3"/></g></svg><span class="t" style="left:505.6px;top:68px;font-size:14px;line-height:16px;color:#4a4a4a;font-weight:400;font-family:'Liberation Sans', sans-serif;">A</span><svg style="left:513.5px;top:66.5px;" width="5" height="5" viewBox="0 0 5 5"><path d="M0 2.500H5M2.500 0V5" stroke="#3a7cb8" stroke-width="1.100" fill="none"/></svg><span class="t" style="left:534.6px;top:70px;font-size:12px;line-height:14px;color:#4a4a4a;font-weight:400;font-family:'Liberation Sans', sans-serif;">A</span><svg style="left:541px;top:68.8px;" width="5" height="1.2" viewBox="0 0 5 1.2"><path d="M0 0.600H5" stroke="#3a7cb8" stroke-width="1.100" fill="none"/></svg><span class="t" style="left:605.8px;top:60px;font-size:5.6px;line-height:6px;color:#2d6da3;font-weight:700;font-family:'Liberation Sans', sans-serif;">1</span><span class="t" style="left:605.8px;top:65px;font-size:5.6px;line-height:6px;color:#2d6da3;font-weight:700;font-family:'Liberation Sans', sans-serif;">2</span><span class="t" style="left:605.8px;top:70px;font-size:5.6px;line-height:6px;color:#2d6da3;font-weight:700;font-family:'Liberation Sans', sans-serif;">3</span><span class="t" style="left:1058.6px;top:95px;font-size:12px;line-height:14px;color:#3a3a3a;font-weight:400;font-family:'Liberation Sans', sans-serif;">a</span><span class="t" style="left:1069.3px;top:95px;font-size:12px;line-height:14px;color:#3a3a3a;font-weight:400;font-family:'Liberation Sans', sans-serif;">b</span><svg style="left:1065px;top:100px;" width="5" height="5" viewBox="0 0 5 5"><path d="M0 2.500H3" stroke="#3a7cb8" stroke-width="1.200" fill="none"/><path d="M2.300 0.300L5 2.500L2.300 4.700Z" fill="#3a7cb8"/></svg><svg style="left:0;top:0" width="1442" height="835" viewBox="0 0 1442 835"><rect x="10.5" y="63.5" width="29.5" height="27" rx="3.5" fill="#fde4b4" stroke="#c99562"/><path d="M18 64.5H32.5V66.5H18Z" fill="#8a8a8a" stroke="#8a8a8a" stroke-linejoin="round"/><circle cx="25" cy="61.7" r="2.1" fill="none" stroke="#8a8a8a" stroke-width="1.4"/><path d="M29.5 74.5H38.5L42.5 78.5V93.5H29.5Z" fill="#fff" stroke="#777"/><path d="M38.5 74.5V78.5H42.5" fill="none" stroke="#777"/><g fill="none" stroke="#b4b4b4" stroke-width="1.3"><path d="M53 60L61.5 70.5M64 60L55.5 70.5" stroke-width="1.6"/><ellipse cx="54.6" cy="72" rx="2.1" ry="2.4" transform="rotate(-30 54.6 72)"/><ellipse cx="62.4" cy="72" rx="2.1" ry="2.4" transform="rotate(30 62.4 72)"/></g><g fill="#ececec" stroke="#bdbdbd"><path d="M57.500 84.500H63.500L66.500 87.500V97.500H57.500Z"/><path d="M63.500 84.500V87.500H66.500" fill="none"/><path d="M51.500 86.500H57.500L60.500 89.500V99.500H51.500Z"/><path d="M57.500 86.500V89.500H60.500" fill="none"/></g><path d="M53 92.500H59M53 94.500H59M53 96.500H59M62 90.500H65M62 92.500H65M62 94.500H65" stroke="#c4c4c4" fill="none"/><path d="M50.300 118.500L59 112.300L63.700 117.500L57.500 125.800Z" fill="#d2d2d2"/><path d="M59 112.300L63.700 117.500L62.300 118.700L57.600 113.300Z" fill="#c4c4c4"/><path d="M62 114.700L65.600 110.300" stroke="#bababa" stroke-width="3.200" stroke-linecap="round" fill="none"/><path d="M53.500 116.500L59.500 123M56 114.500L61.500 120.500" stroke="#c6c6c6" stroke-width="0.600" fill="none"/><rect x="104.5" y="63.5" width="31" height="24" rx="2.5" fill="#fff" stroke="#7f7f7f"/><rect x="108" y="67" width="24" height="4" fill="#cfcfcf"/><rect x="124" y="73" width="8" height="12" fill="#cfcfcf"/><path d="M108 73.5H121M108 76H118M108 78.500H118M108 81H118M108 83.500H119" stroke="#bdbdbd" fill="none"/><path d="M106 59V67M102 63H110" stroke="#f9c000" stroke-width="2" fill="none"/><rect x="166.5" y="60.5" width="17" height="13" rx="1.5" fill="#fff" stroke="#7f7f7f"/><rect x="169" y="63" width="12" height="2" fill="#d4d4d4"/><rect x="169" y="66" width="5.500" height="5.500" fill="#d4d4d4"/><rect x="175.500" y="66" width="5.500" height="5.500" fill="#d4d4d4"/><rect x="166.500" y="86.500" width="17" height="13" rx="1.500" fill="#fff" stroke="#7f7f7f"/><rect x="169" y="88.500" width="12" height="1.500" fill="#d8d8d8"/><rect x="178.500" y="91.500" width="2.500" height="6.500" fill="#d8d8d8"/><rect x="169" y="96.800" width="4" height="1" fill="#c8c8c8"/><path d="M170.800 94.500A4 4 0 0 1 178.300 95.800" fill="none" stroke="#3a7cb8" stroke-width="1.500"/><path d="M168.600 92L169.300 96.700L173.600 95Z" fill="#3a7cb8"/><rect x="166.5" y="112.5" width="17" height="13" rx="1.5" fill="#fff" stroke="#7f7f7f"/><rect x="169" y="115" width="12" height="2" fill="#d8d8d8"/><path d="M169 119.500H176M169 121.500H175M169 123.500H175" stroke="#c4c4c4" fill="none"/><rect x="176.5" y="119" width="8" height="9" fill="#f5f6f7"/><path d="M177 120.700H184M177 123.500H184M177 126.300H184" stroke="#2d6da3" stroke-width="1.700" fill="none"/><path d="M569 62.500H577M569 67.500H577M569 72.500H577" stroke="#7f7f7f" fill="none"/><path d="M565 61.500H567V63.500H565ZM565 66.500H567V68.500H565ZM565 71.500H567V73.500H565Z" fill="#3a7cb8"/><path d="M611 62.500H619M611 67.500H619M611 72.500H619" stroke="#7f7f7f" fill="none"/><g stroke="#b4b4b4" fill="none"><path d="M570 87.500H578M570 90.500H578M563 93.500H578M563 96.500H578M563 99.500H578"/><path d="M563 89H568" stroke-width="1.400"/></g><path d="M566.500 86.500L569.500 89L566.500 91.500Z" fill="#b4b4b4"/><g stroke="#b4b4b4" fill="none"><path d="M598 87.500H606M598 90.500H606M591 93.500H606M591 96.500H606M591 99.500H606"/><path d="M592.500 89H597" stroke-width="1.400"/></g><path d="M594 86.500L591 89L594 91.500Z" fill="#b4b4b4"/><path d="M623 88.500H631M623 91.500H629M623 94.500H631M623 97.500H629" stroke="#7f7f7f" fill="none"/><path d="M618.500 87.500V98.500" stroke="#3a7cb8" stroke-width="1.300" fill="none"/><path d="M616 89.500L618.500 86.300L621 89.500M616 96.500L618.500 99.700L621 96.500" fill="none" stroke="#3a7cb8" stroke-width="1.300"/><rect x="559.5" y="107.5" width="23" height="23" fill="#cfe3f8" stroke="#4a90d9"/><path d="M565 113.50H577M565 115.55H573M565 117.60H577M565 119.65H573M565 121.70H577M565 123.75H573" stroke="#6a6a6a" stroke-width="1" fill="none"/><path d="M590 113.50H602M592 115.55H600M590 117.60H602M592 119.65H600M590 121.70H602M592 123.75H600" stroke="#6a6a6a" stroke-width="1" fill="none"/><path d="M615 113.50H627M619 115.55H627M615 117.60H627M619 119.65H627M615 121.70H627M619 123.75H627" stroke="#6a6a6a" stroke-width="1" fill="none"/><path d="M640 113.50H652M640 115.55H652M640 117.60H652M640 119.65H652M640 121.70H652M640 123.75H652" stroke="#6a6a6a" stroke-width="1" fill="none"/><rect x="671.500" y="60.500" width="13" height="13" fill="#fff"/><path d="M674.500 60.500H682.500M673.500 73.500H682.500M671.500 64.500V71.500M684.500 62.500V71.500" stroke="#6e6e6e" stroke-width="1.100" fill="none"/><rect x="669.5" y="72.500" width="3" height="3" fill="#f5f6f7"/><path d="M684.300 59H686.300V61H684.300ZM684.300 73H686.300V75H684.300ZM670.300 73H672.300V75H670.300Z" fill="#7f9cf5"/><path d="M672 58V64M669 61H675" stroke="#f9c000" stroke-width="1.700" fill="none"/><defs><linearGradient id="bk" x1="0" x2="1" y1="0" y2="1"><stop offset="0" stop-color="#f4f4f4"/><stop offset="1" stop-color="#b8b8b8"/></linearGradient></defs><rect x="669.500" y="87.500" width="17" height="9" fill="none" stroke="#c2c2c2"/><rect x="669" y="98" width="18" height="4" fill="#b2b2b2"/><path d="M671.300 91.300L676.500 86.300L681 89.500L676.300 95.800Z" fill="url(#bk)" stroke="#c8c8c8" stroke-width="0.600"/><path d="M680.300 89.300C683.500 88.500 685 92 683.300 96.200L680.800 96.200C682.300 93.500 682 91.500 680.300 89.300Z" fill="#ababab"/><circle cx="676" cy="85.600" r="1.700" fill="none" stroke="#c2c2c2" stroke-width="1"/><path d="M682 113.500H669.500V122.500H676" fill="none" stroke="#c2c2c2"/><rect x="669" y="124" width="18" height="4" fill="#b2b2b2"/><path d="M686.800 110L687.200 111.500L682 118L679.300 115.800Z" fill="#cacaca"/><path d="M682.200 117.600L681 119L678.400 117L679.600 115.600Z" fill="#e2e2e2"/><path d="M674.800 122.600C678 123.200 680.800 121.600 681.200 118.800L678.500 116.600C676 117.500 677 121 674.800 122.600Z" fill="#a2a2a2"/><rect x="868.500" y="59.500" width="15" height="15" fill="#ececec" stroke="#bdbdbd"/><path d="M879.500 61V73M881.500 61V73" stroke="#c8c8c8" stroke-dasharray="2 1" fill="none"/><rect x="868.500" y="85.500" width="15" height="15" fill="#ececec" stroke="#bdbdbd"/><path d="M870 92.500H882" stroke="#c8c8c8" stroke-dasharray="3 1" fill="none"/><path d="M870.500 111.500H877.500L881.500 115.500V126.500H870.500Z" fill="#f0f0f0" stroke="#b0b0b0"/><path d="M877.500 111.500V115.500H881.500" fill="none" stroke="#b0b0b0"/><path d="M872 118.500H875.500M876.500 118.500H880M872 120.500H875.500M876.500 120.500H880M872 122.500H875.500M876.500 122.500H880M872 124.500H875.500M876.500 124.500H880" stroke="#c0c0c0" fill="none"/><circle cx="1066" cy="65" r="4.300" fill="none" stroke="#7f7f7f" stroke-width="1.200"/><path d="M1069.300 68.300L1074.500 73.300" stroke="#7f9cf5" stroke-width="1.800" fill="none"/><path d="M1166.500 61.300A4.300 4.300 0 1 0 1167.300 66.500" fill="none" stroke="#7f7f7f" stroke-width="1.200"/><path d="M1165.800 68.300L1171.500 73.300" stroke="#7f9cf5" stroke-width="1.800" fill="none"/><path d="M1164 60L1168.500 62L1166.500 65.500" fill="none" stroke="#3b6fd4" stroke-width="1.300"/><rect x="1157.500" y="95.500" width="16" height="13" rx="1.500" fill="#fff" stroke="#7a7a7a"/><rect x="1160" y="98" width="11" height="1.500" fill="#cfcfcf"/><rect x="1166" y="100.500" width="5" height="6" fill="#cfcfcf"/><path d="M1160 101.500H1165M1160 103.500H1164" stroke="#c4c4c4" fill="none"/><rect x="1155.500" y="104" width="9.500" height="7.500" fill="#f5f6f7"/><rect x="1157.500" y="104" width="8" height="4" fill="#fff"/><path d="M1156 107.800H1162" stroke="#3a7cb8" stroke-width="2.400" fill="none"/><path d="M1160.800 104L1165.600 107.800L1160.800 111.600Z" fill="#3a7cb8"/><rect x="1340.500" y="61.500" width="24" height="19" fill="#fff" stroke="#3a7cb8" stroke-dasharray="2 2"/><path d="M1356.800 72V89.500L1361 85.500L1369.300 85.300Z" fill="#fff" stroke="#8a8a8a" stroke-linejoin="round"/><path d="M13 174.500H26M13 177.500H26M13 180.500H26M13 183.500H26M13 186.500H26" stroke="#555" fill="none"/><path d="M45.200 177.500A3.600 3.600 0 1 1 51.800 177.500" fill="none" stroke="#7f9cf5" stroke-width="1.500" opacity=".85"/><path d="M47.300 183V175.300Q47.300 174.100 48.500 174.100Q49.700 174.100 49.700 175.300V180V179.300Q49.900 178.400 51 178.400Q52.100 178.400 52.100 179.400V181V180.100Q52.300 179.200 53.300 179.200Q54.400 179.200 54.400 180.200V181.800V181.100Q54.600 180.300 55.300 180.300Q56.100 180.300 56.100 181.300V184.500Q56.100 187 54 188.400H47.600Q45.500 186 44.100 182.400Q43.700 181.100 44.700 180.800Q45.600 180.600 46.100 181.700L47.300 184Z" fill="#fff" stroke="#6a6a6a" stroke-width="1.100" stroke-linejoin="round"/><path d="M75.500 172.500H82.500L86.500 176.500V187.500H75.500Z" fill="#fff" stroke="#6a6a6a"/><path d="M82.500 172.500V176.500H86.500" fill="none" stroke="#6a6a6a"/><path d="M80 185.500H81M82 185.500H83M84 185.500H85" stroke="#555" fill="none"/><path d="M110.500 186.500V175Q110.500 174 111.500 174H116.500L118 175.500H124.500Q125.500 175.500 125.500 176.500V178.500" fill="#fde4b4" stroke="#c99562"/><path d="M110.500 186.500L113.500 178.500H128L125 186.500Z" fill="#fde4b4" stroke="#c99562" stroke-linejoin="round"/><path d="M156.500 172.500H170.500V186.500H158.500L156.500 184.500Z" fill="#7f9cf5" stroke="#5577dd"/><rect x="159.500" y="172.500" width="8" height="6" fill="#f4f4ff" stroke="#5577dd"/><rect x="160" y="181.500" width="7" height="5" fill="#f4f4f4"/><path d="M189 178.500C191 173 198.500 173.500 198.500 179C198.500 182.500 195 185 192.500 187.500" fill="none" stroke="#3a7cb8" stroke-width="1.600"/><path d="M187 174L187.500 180.500L193.500 179Z" fill="#3a7cb8"/><path d="M235.500 178.500C233.500 173 226 173.500 226 179C226 182.500 229.500 185 232 187.500" fill="none" stroke="#b4b4b4" stroke-width="1.600"/><path d="M237.500 174L237 180.500L231 179Z" fill="#b4b4b4"/><path d="M262.500 173L265 175.500L262.500 178M266 173L268.500 175.500L266 178" fill="none" stroke="#555" stroke-width="1"/><path d="M293.500 175.500H300.500L304.500 179.500V190.500H293.500Z" fill="#fff" stroke="#8a8a8a"/><path d="M300.500 175.500V179.500H304.500" fill="none" stroke="#8a8a8a"/><path d="M295.500 183.500H300M295.500 185.500H300M295.500 187.500H300" stroke="#f0a040" fill="none"/><circle cx="298" cy="179.500" r="1.500" fill="#f0a040"/><rect x="301" y="182.500" width="7.500" height="9" fill="#f09a30"/><rect x="1177.5" y="203.5" width="17" height="13" rx="2" fill="#fff" stroke="#777"/><rect x="1180" y="205.500" width="12" height="2" fill="#cfcfcf"/><rect x="1180" y="208.500" width="5.500" height="6" fill="#cfcfcf"/><rect x="1186.500" y="208.500" width="5.500" height="6" fill="#cfcfcf"/><rect x="1202.5" y="203.5" width="17" height="13" rx="2" fill="#fff" stroke="#777"/><rect x="1205" y="205.500" width="10" height="1.500" fill="#cfcfcf"/><path d="M1205 209.500H1211M1205 211.500H1210M1205 213.500H1209" stroke="#bdbdbd" fill="none"/><path d="M1208 218.500L1221 206.500" stroke="#f0f0f0" stroke-width="4.500"/><path d="M1214 212.500L1219.800 207" stroke="#bcbcbc" stroke-width="2.600" fill="none"/><path d="M1209 217.500Q1210 213.500 1213 212L1214.600 214.200Q1213 217 1209 217.500Z" fill="#8aa4f5"/><rect x="1227.5" y="203.5" width="17" height="13" rx="2" fill="#fff" stroke="#777"/><rect x="1230" y="205.500" width="10" height="1.500" fill="#cfcfcf"/><path d="M1230 209.500H1234M1230 211.500H1234M1230 213.500H1234" stroke="#bdbdbd" fill="none"/><defs><linearGradient id="rb" x1="0" x2="1" y1="0" y2="0"><stop offset="0" stop-color="#ff2020"/><stop offset=".2" stop-color="#ff9a00"/><stop offset=".4" stop-color="#f0f000"/><stop offset=".6" stop-color="#20c030"/><stop offset=".8" stop-color="#2060ff"/><stop offset="1" stop-color="#a020d0"/></linearGradient></defs><rect x="1234.500" y="210.500" width="10" height="8" fill="url(#rb)" stroke="#666"/><rect x="1252.5" y="203.5" width="17" height="13" rx="2" fill="#fff" stroke="#777"/><rect x="1254.500" y="205.500" width="13" height="9" fill="#dfe7ff"/><rect x="1256" y="207" width="10" height="1.500" fill="#fff"/><rect x="1256" y="209.500" width="4" height="1" fill="#fff"/><rect x="1256" y="211.500" width="4" height="1" fill="#fff"/><rect x="1261.500" y="209.500" width="4.500" height="4" fill="#fff"/><rect x="1277.5" y="203.5" width="17" height="13" rx="2" fill="#fff" stroke="#777"/><path d="M1284.500 203.500V216.500" stroke="#777" fill="none"/><rect x="1276" y="208" width="3" height="5" fill="#f0f0f0"/><path d="M1277 210.500H1282" stroke="#3a7cb8" stroke-width="1.300" fill="none"/><path d="M1280.500 208L1283.300 210.500L1280.500 213" fill="none" stroke="#3a7cb8" stroke-width="1.300"/><path d="M1312.00 203.70L1313.76 208.57L1318.94 208.74L1314.85 211.93L1316.29 216.91L1312.00 214.00L1307.71 216.91L1309.15 211.93L1305.06 208.74L1310.24 208.57Z" fill="#8db4ee" stroke="#3a7cb8" stroke-width="1.200" stroke-linejoin="miter"/><path d="M1306 203V209M1303 206H1309" stroke="#f9c000" stroke-width="1.800" fill="none"/><path d="M1336.30 203.70L1338.06 208.57L1343.24 208.74L1339.15 211.93L1340.59 216.91L1336.30 214.00L1332.01 216.91L1333.45 211.93L1329.36 208.74L1334.54 208.57Z" fill="#ffe3a4" stroke="#e9a310" stroke-width="1.200" stroke-linejoin="miter"/><path d="M1147 727.500H1157V729H1147ZM1147 735H1157L1152 730Z" fill="#000"/><path d="M1147 749H1157L1152 744ZM1147 750.500H1157V752.500H1147Z" fill="#000"/><rect x="1149.500" y="760.500" width="7" height="5" fill="#fff" stroke="#000" stroke-width="1.200"/><rect x="1146.500" y="763.500" width="7" height="5.500" fill="#fff" stroke="#000" stroke-width="1.200"/><path d="M1147 778H1157V780H1147ZM1147 781.500H1157L1152 786.500Z" fill="#000"/><path d="M1147 795H1157L1152 800ZM1147 801H1157V803H1147Z" fill="#000"/><rect x="1073.5" y="813.5" width="17" height="13" rx="2" fill="#fff" stroke="#777"/><rect x="1076" y="815.500" width="12" height="1.500" fill="#cfcfcf"/><rect x="1083" y="818.500" width="5" height="6" fill="#cfcfcf"/><path d="M1076 819.500H1081M1076 821.500H1080M1076 823.500H1080" stroke="#bdbdbd" fill="none"/><rect x="1099.5" y="812.5" width="6" height="6" rx="1.200" fill="#f8f8f8" stroke="#8a8a8a"/><path d="M1101.0 815.5H1104.0" stroke="#aaa" fill="none"/><rect x="1099.5" y="821.5" width="6" height="6" rx="1.200" fill="#f8f8f8" stroke="#8a8a8a"/><path d="M1101.0 824.5H1104.0" stroke="#aaa" fill="none"/><rect x="1108.5" y="812.5" width="6" height="6" rx="1.200" fill="#f8f8f8" stroke="#8a8a8a"/><path d="M1110.0 815.5H1113.0" stroke="#aaa" fill="none"/><rect x="1108.5" y="821.5" width="6" height="6" rx="1.200" fill="#f8f8f8" stroke="#8a8a8a"/><path d="M1110.0 824.5H1113.0" stroke="#aaa" fill="none"/><path d="M1123 813.500H1128M1124 815.500H1127M1124 817.500H1127M1123 821.500H1128M1124 823.500H1127M1124 825.500H1127" stroke="#c4c4c4" fill="none"/><rect x="1130.500" y="813.500" width="10" height="9" rx="1.500" fill="#fafafa" stroke="#9a9a9a"/><path d="M1132.500 816.500H1138.500M1132.500 819H1136" stroke="#c4c4c4" fill="none"/><rect x="1148.500" y="813.500" width="17" height="13" rx="2" fill="#fff" stroke="#8a8a8a"/><rect x="1151" y="815.500" width="12" height="1.500" fill="#cfcfcf"/><path d="M1151 819.500H1155M1151 821.500H1155M1151 823.500H1155" stroke="#bdbdbd" fill="none"/><path d="M1155.500 819.500H1166V825L1163 828H1155.500Z" fill="#fde0a8" stroke="#d89040" stroke-linejoin="round"/><path d="M1163 828V825H1166" fill="none" stroke="#d89040"/><path d="M1175 813H1188" stroke="#777" stroke-width="1.400" fill="none"/><rect x="1176.500" y="813.500" width="10" height="9" fill="#fff" stroke="#8a8a8a"/><path d="M1180.500 822.500V826.500M1177.500 827H1184" stroke="#777" stroke-width="1.400" fill="none"/><path d="M1185 820.500L1190.500 824L1185 827.500Z" fill="#ffe3a4" stroke="#f0a000" stroke-linejoin="round"/><path d="M1196 817H1203.500L1199.750 821.300Z" fill="#000"/></svg></div></body></html>
